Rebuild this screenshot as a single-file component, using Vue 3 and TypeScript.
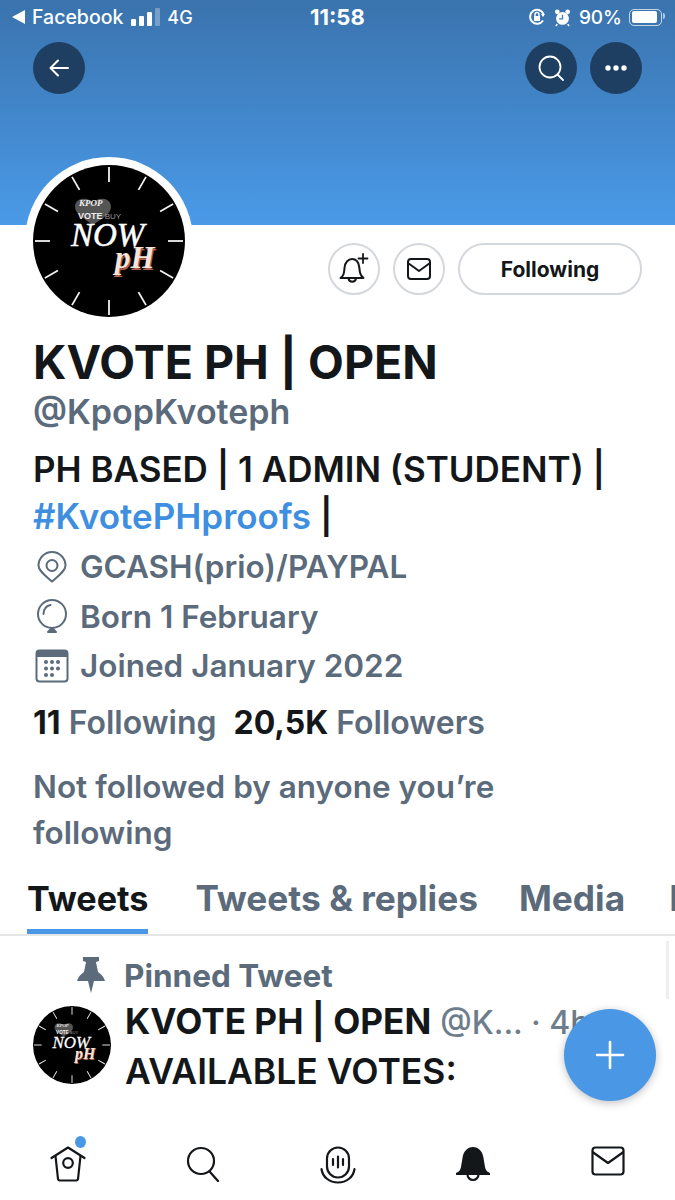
<script setup lang="ts">
const ticks = [0, 30, 60, 90, 120, 150, 180, 210, 240, 270, 300, 330]
const tabs = ['Tweets & replies', 'Media']
</script>

<template>
  <div class="page">
    <svg width="0" height="0" class="defs">
      <symbol id="logo" viewBox="0 0 152 152">
        <circle cx="76" cy="76" r="76" fill="#000" />
        <line
          v-for="t in ticks"
          :key="t"
          x1="76"
          y1="2"
          x2="76"
          y2="17"
          :transform="`rotate(${t} 76 76)`"
          stroke="#f2f2f2"
          stroke-width="1.800"
        />
        <path d="M60 39c-2-7-18-8-18 3 0 7 10 12 18 18 8-6 18-11 18-18 0-11-16-10-18-3z" fill="#555" />
        <text x="46" y="41" class="lg-kpop">KPOP</text>
        <text x="45" y="54" class="lg-vote">VOTE<tspan class="lg-buy"> BUY</tspan></text>
        <text x="38" y="81" class="lg-now">NOW</text>
        <text x="83" y="105" class="lg-ph-back">pH</text>
        <text x="82" y="103" class="lg-ph">pH</text>
      </symbol>
    </svg>

    <header class="banner">
      <div class="status">
        <div class="status-side">
          <svg width="13" height="14" viewBox="0 0 13 14"><path d="M13 0v14L0 7z" fill="#fff" /></svg>
          <span class="carrier">Facebook</span>
          <span class="bars"><i class="b1"></i><i class="b2"></i><i class="b3"></i><i class="b4"></i></span>
          <span>4G</span>
        </div>
        <span class="clock">11:58</span>
        <div class="status-side right">
          <svg width="18" height="18" viewBox="0 0 18 18" fill="none" stroke="#fff" stroke-width="2">
            <path d="M15 12.500A7 7 0 1 1 15.500 6" />
            <path d="M13 6h4l-2 3z" fill="#fff" stroke="none" />
            <rect x="6" y="8" width="6" height="5" fill="#fff" stroke="none" />
            <path d="M7 8V6.500a2 2 0 0 1 4 0V8" stroke-width="1.400" />
          </svg>
          <svg width="17" height="19" viewBox="0 0 18 19">
            <circle cx="9" cy="10.500" r="6.800" fill="#fff" />
            <path d="M9 6.500v4.500H5.500" fill="none" stroke="#3f7cb9" stroke-width="1.400" />
            <circle cx="3.500" cy="3.500" r="2.500" fill="#fff" />
            <circle cx="14.500" cy="3.500" r="2.500" fill="#fff" />
            <path d="M3.500 16.500l-1.500 2M14.500 16.500l1.500 2" stroke="#fff" stroke-width="1.600" />
          </svg>
          <span class="pct">90%</span>
          <span class="battery"><i></i></span>
        </div>
      </div>
      <div class="nav">
        <button class="nav-btn">
          <svg width="24" height="24" viewBox="0 0 24 24" fill="none" stroke="#fff" stroke-width="2" stroke-linecap="round" stroke-linejoin="round">
            <path d="M21 12H4M11 4.500L3.500 12l7.500 7.500" />
          </svg>
        </button>
        <div class="nav-right">
          <button class="nav-btn">
            <svg width="28" height="28" viewBox="0 0 28 28" fill="none" stroke="#fff" stroke-width="1.800" stroke-linecap="round">
              <circle cx="13" cy="13" r="10.500" />
              <path d="M20.500 20.500L26 26" />
            </svg>
          </button>
          <button class="nav-btn">
            <svg width="24" height="6" viewBox="0 0 24 6" fill="#fff">
              <circle cx="4" cy="3" r="2.700" />
              <circle cx="12" cy="3" r="2.700" />
              <circle cx="20" cy="3" r="2.700" />
            </svg>
          </button>
        </div>
      </div>
    </header>

    <section class="profile">
      <div class="top-row">
        <div class="avatar">
          <svg width="152" height="152"><use href="#logo" /></svg>
        </div>
        <div class="actions">
          <button class="round">
            <svg width="34" height="34" viewBox="0 0 34 34" fill="none" stroke="#14171a" stroke-width="2" stroke-linejoin="round" stroke-linecap="round">
              <path d="M3.500 26c3.500-2.500 3.500-5 4-10C8 10 11.500 7 15 7s6.500 2.500 7.200 8c.6 5.500 1 8.500 4.300 11z" />
              <path d="M11.500 26.500a3.800 3.800 0 0 0 7.500 0" />
              <path d="M26 2v9M21.500 6.500h9" stroke-width="1.800" />
            </svg>
          </button>
          <button class="round">
            <svg width="26" height="24" viewBox="0 0 26 24" fill="none" stroke="#14171a" stroke-width="2" stroke-linejoin="round">
              <rect x="2" y="2" width="22" height="20" rx="3" />
              <path d="M2 6l11 8 11-8" />
            </svg>
          </button>
          <button class="follow">Following</button>
        </div>
      </div>

      <h1 class="name">KVOTE PH | OPEN</h1>
      <div class="handle">@KpopKvoteph</div>
      <p class="bio">PH BASED | 1 ADMIN (STUDENT) |<br /><span class="link">#KvotePHproofs</span> |</p>

      <div class="meta">
        <svg width="34" height="34" viewBox="0 0 34 34" fill="none" stroke="#5b6b7b" stroke-width="2">
          <path d="M19 30.500C25 25 32.500 20 32.500 14.500a13.500 13.500 0 0 0-27 0C5.500 20 13 25 19 30.500z" transform="translate(-2 1)" />
          <circle cx="17" cy="15.500" r="5.500" />
        </svg>
        <span>GCASH(prio)/PAYPAL</span>
      </div>
      <div class="meta">
        <svg width="34" height="34" viewBox="0 0 34 34" fill="none" stroke="#5b6b7b" stroke-width="2" stroke-linecap="round">
          <circle cx="17" cy="15" r="14" />
          <path d="M8.500 15c0-5 3-8 7-9" />
          <path d="M13 33l4-4 4 4z" fill="#5b6b7b" stroke-linejoin="round" />
        </svg>
        <span>Born 1 February</span>
      </div>
      <div class="meta">
        <svg width="34" height="34" viewBox="0 0 34 34" fill="none">
          <rect x="1.500" y="1.500" width="31" height="31" rx="3" stroke="#5b6b7b" stroke-width="2" />
          <path d="M1.500 4.500a3 3 0 0 1 3-3h25a3 3 0 0 1 3 3V8h-31z" fill="#5b6b7b" />
          <g fill="#5b6b7b">
            <circle cx="11" cy="13" r="2" /><circle cx="17" cy="13" r="2" /><circle cx="23" cy="13" r="2" />
            <circle cx="11" cy="19.500" r="2" /><circle cx="17" cy="19.500" r="2" /><circle cx="23" cy="19.500" r="2" />
            <circle cx="11" cy="26" r="2" /><circle cx="17" cy="26" r="2" />
          </g>
        </svg>
        <span>Joined January 2022</span>
      </div>

      <div class="counts">
        <span><b>11</b> Following</span>
        <span><b>20,5K</b> Followers</span>
      </div>
      <p class="mutual">Not followed by anyone you’re following</p>
    </section>

    <nav class="tabs">
      <div class="tab active">Tweets</div>
      <div v-for="t in tabs" :key="t" class="tab">{{ t }}</div>
      <div class="tab">Likes</div>
    </nav>

    <section class="feed">
      <div class="scrollbar"></div>
      <div class="pinned">
        <svg width="28" height="36" viewBox="0 0 28 36" fill="#5b6b7b">
          <path d="M6 0h16v4l-3 1 2 10c3 2 6 5 7 9H17l-3 12-3-12H0c1-4 4-7 7-9L9 5 6 4z" />
        </svg>
        <span>Pinned Tweet</span>
      </div>
      <div class="tweet">
        <svg class="tweet-avatar" width="78" height="78"><use href="#logo" /></svg>
        <div class="tweet-body">
          <div class="tweet-head"><b>KVOTE PH | OPEN</b> <span>@K... · 4h</span></div>
          <div class="tweet-text">AVAILABLE VOTES:</div>
        </div>
      </div>
      <button class="fab">
        <svg width="32" height="32" viewBox="0 0 32 32" stroke="#fff" stroke-width="2.600" stroke-linecap="round">
          <path d="M16 3v26M3 16h26" />
        </svg>
      </button>
    </section>

    <footer class="tabbar">
      <div class="tabicon dot">
        <svg width="36" height="36" viewBox="0 0 36 36" fill="none" stroke="#14171a" stroke-width="2.200" stroke-linejoin="round">
          <path d="M1.500 12L18 1.500 34.500 12" stroke-linecap="round" />
          <path d="M5.500 10l2.500 23a2 2 0 0 0 2 1.500h16a2 2 0 0 0 2-1.500l2.500-23" />
          <circle cx="18" cy="17" r="4.800" />
        </svg>
      </div>
      <div class="tabicon">
        <svg width="34" height="36" viewBox="0 0 34 36" fill="none" stroke="#14171a" stroke-width="2.200" stroke-linecap="round">
          <circle cx="15" cy="15" r="13" />
          <path d="M24 26l8 9" />
        </svg>
      </div>
      <div class="tabicon">
        <svg width="36" height="38" viewBox="0 0 36 38" fill="none" stroke="#14171a" stroke-width="2.200" stroke-linecap="round">
          <rect x="7" y="1.500" width="22" height="30" rx="11" />
          <path d="M1.500 23c1 8 8 13.500 16.500 13.500S33.500 31 34.500 23" />
          <path d="M13 13v6M18 10.500v11M23 13v6" />
        </svg>
      </div>
      <div class="tabicon">
        <svg width="34" height="36" viewBox="0 0 34 36" fill="none" stroke="#14171a" stroke-width="2.200">
          <path d="M0 27c3-1 4.500-3 5-6l1.500-9C7.500 5 11.500 1 17 1s9.500 4 10.500 11l1.500 9c.5 3 2 5 5 6v2H0z" fill="#14171a" stroke="none" />
          <path d="M11.500 28.500a5.500 5.500 0 1 0 11 0" />
        </svg>
      </div>
      <div class="tabicon">
        <svg width="34" height="30" viewBox="0 0 34 30" fill="none" stroke="#14171a" stroke-width="2.200" stroke-linejoin="round">
          <rect x="1.500" y="1.500" width="31" height="27" rx="3" />
          <path d="M1.500 6L17 17 32.500 6" />
        </svg>
      </div>
    </footer>
  </div>
</template>

<style scoped>
.page {
  width: 675px;
  height: 1200px;
  overflow: hidden;
  background: #fff;
  color: #14171a;
  font-family: Inter, "Liberation Sans", sans-serif;
}
.defs {
  position: absolute;
}
.lg-kpop {
  font: italic 700 9px "Liberation Serif", serif;
  fill: #eee;
}
.lg-vote {
  font: 700 9px "Liberation Sans", sans-serif;
  fill: #eee;
}
.lg-buy {
  font-weight: 400;
  font-size: 8px;
  fill: #999;
}
.lg-now {
  font: italic 400 33px "Liberation Serif", serif;
  fill: #fff;
  stroke: #fff;
  stroke-width: 0.5;
}
.lg-ph {
  font: italic 700 31px "Liberation Serif", serif;
  fill: #f7e4da;
}
.lg-ph-back {
  font: italic 700 31px "Liberation Serif", serif;
  fill: #b0604c;
}
.banner {
  height: 225px;
  box-sizing: border-box;
  background: linear-gradient(#3a73ad, #4a9ae8);
  color: #fff;
}
.status {
  display: flex;
  align-items: center;
  justify-content: space-between;
  height: 34px;
  padding: 0 13px 0 12px;
  font-size: 18px;
  font-weight: 500;
  position: relative;
}
.status-side {
  display: flex;
  align-items: center;
  gap: 7px;
}
.status-side.right {
  gap: 8px;
}
.carrier {
  font-size: 19.500px;
}
.pct {
  font-size: 19px;
}
.clock {
  position: absolute;
  left: 310px;
  font-weight: 700;
  font-size: 22px;
}
.bars {
  display: flex;
  align-items: flex-end;
  gap: 3px;
  height: 18px;
  margin-left: 1px;
}
.bars i {
  display: block;
  width: 5px;
  background: #fff;
  border-radius: 1px;
}
.bars .b1 { height: 7px; }
.bars .b2 { height: 10px; }
.bars .b3 { height: 14px; }
.bars .b4 { height: 18px; opacity: 0.3; }
.battery {
  position: relative;
  display: block;
  width: 33px;
  height: 17px;
  box-sizing: border-box;
  border: 1.500px solid rgba(255, 255, 255, 0.7);
  border-radius: 5px;
  padding: 1.500px;
  margin-left: -1px;
}
.battery::after {
  content: "";
  position: absolute;
  top: 3px;
  right: -4px;
  width: 2px;
  height: 6px;
  background: rgba(255, 255, 255, 0.6);
  border-radius: 0 2px 2px 0;
}
.battery i {
  display: block;
  width: 90%;
  height: 100%;
  background: #fff;
  border-radius: 2px;
}
.nav {
  display: flex;
  justify-content: space-between;
  padding: 8px 33px 0;
}
.nav-right {
  display: flex;
  gap: 13px;
}
.nav-btn {
  display: flex;
  align-items: center;
  justify-content: center;
  width: 52px;
  height: 52px;
  padding: 0;
  border: 0;
  border-radius: 50%;
  background: #1e3f61;
}
.profile {
  padding: 0 33px;
}
.top-row {
  display: flex;
  justify-content: space-between;
  height: 111px;
}
.avatar {
  width: 152px;
  height: 152px;
  margin: -68px 0 0 -8px;
  padding: 8px;
  border-radius: 50%;
  background: #fff;
}
.actions {
  display: flex;
  gap: 13px;
  margin-top: 18px;
  height: 52px;
}
.round,
.follow {
  display: flex;
  align-items: center;
  justify-content: center;
  height: 52px;
  padding: 0;
  background: #fff;
  border: 2px solid #d4d8dc;
  border-radius: 26px;
}
.round {
  width: 52px;
}
.follow {
  width: 184px;
  color: #14171a;
  font: 700 21px Inter, "Liberation Sans", sans-serif;
}
.name {
  margin: 0;
  font-size: 46.500px;
  line-height: 53px;
  font-weight: 700;
}
.handle {
  color: #5b6b7b;
  font-size: 34px;
  line-height: 46px;
  font-weight: 600;
}
.bio {
  margin: 11px 0 2px;
  font-size: 35px;
  line-height: 47px;
  font-weight: 600;
}
.link {
  color: #3f8fe0;
}
.meta {
  display: flex;
  align-items: center;
  gap: 11px;
  height: 49.500px;
  color: #5b6b7b;
  font-size: 31.500px;
  font-weight: 600;
}
.meta svg {
  margin-left: 2px;
}
.counts {
  display: flex;
  gap: 17px;
  margin-top: 14px;
  color: #5b6b7b;
  font-size: 32px;
  line-height: 36px;
  font-weight: 600;
}
.counts b {
  color: #14171a;
  font-weight: 700;
}
.mutual {
  margin: 23px 0 0;
  width: 520px;
  color: #5b6b7b;
  font-size: 31.500px;
  line-height: 46px;
  font-weight: 600;
}
.tabs {
  display: flex;
  gap: 41px;
  height: 68px;
  margin-top: 12px;
  padding-left: 27px;
  box-sizing: border-box;
  border-bottom: 2px solid #e4e6e8;
  overflow: hidden;
  white-space: nowrap;
}
.tab {
  flex: none;
  height: 66px;
  box-sizing: border-box;
  padding-top: 11px;
  color: #5b6b7b;
  font-size: 35.300px;
  line-height: 40px;
  font-weight: 700;
}
.tab:last-child {
  margin-left: 3px;
}
.tab.active {
  color: #14171a;
  font-size: 34.200px;
  border-bottom: 5px solid #4a97e6;
  margin-right: 6px;
}
.feed {
  position: relative;
  height: 196px;
  box-sizing: border-box;
  padding: 20px 0 0 33px;
}
.scrollbar {
  position: absolute;
  top: 5px;
  right: 6px;
  width: 3px;
  height: 58px;
  background: #eceef0;
}
.pinned {
  display: flex;
  align-items: center;
  gap: 19px;
  padding-left: 44px;
  color: #5b6b7b;
  font-size: 31.500px;
  font-weight: 700;
}
.tweet {
  display: flex;
  gap: 14px;
  margin-top: 11px;
}
.tweet-body {
  font-size: 35.500px;
  line-height: 49px;
  white-space: nowrap;
  font-weight: 600;
}
.tweet-head {
  margin-top: -9px;
}
.tweet-head b {
  font-weight: 700;
  font-size: 35.200px;
}
.tweet-head span {
  color: #6e7d8b;
  font-size: 32px;
  font-weight: 500;
}
.fab {
  position: absolute;
  left: 564px;
  top: 73px;
  display: flex;
  align-items: center;
  justify-content: center;
  width: 92px;
  height: 92px;
  padding: 0;
  border: 0;
  border-radius: 50%;
  background: #4a97e6;
  box-shadow: 0 2px 8px rgba(0, 0, 0, 0.25);
}
.tabbar {
  display: flex;
  justify-content: space-between;
  padding: 14px 49px 0 50px;
}
.tabicon {
  position: relative;
  display: flex;
  justify-content: center;
  width: 36px;
}
.dot::after {
  content: "";
  position: absolute;
  top: -10px;
  right: 0;
  width: 11px;
  height: 12px;
  border-radius: 50%;
  background: #4a97e6;
}
</style>
